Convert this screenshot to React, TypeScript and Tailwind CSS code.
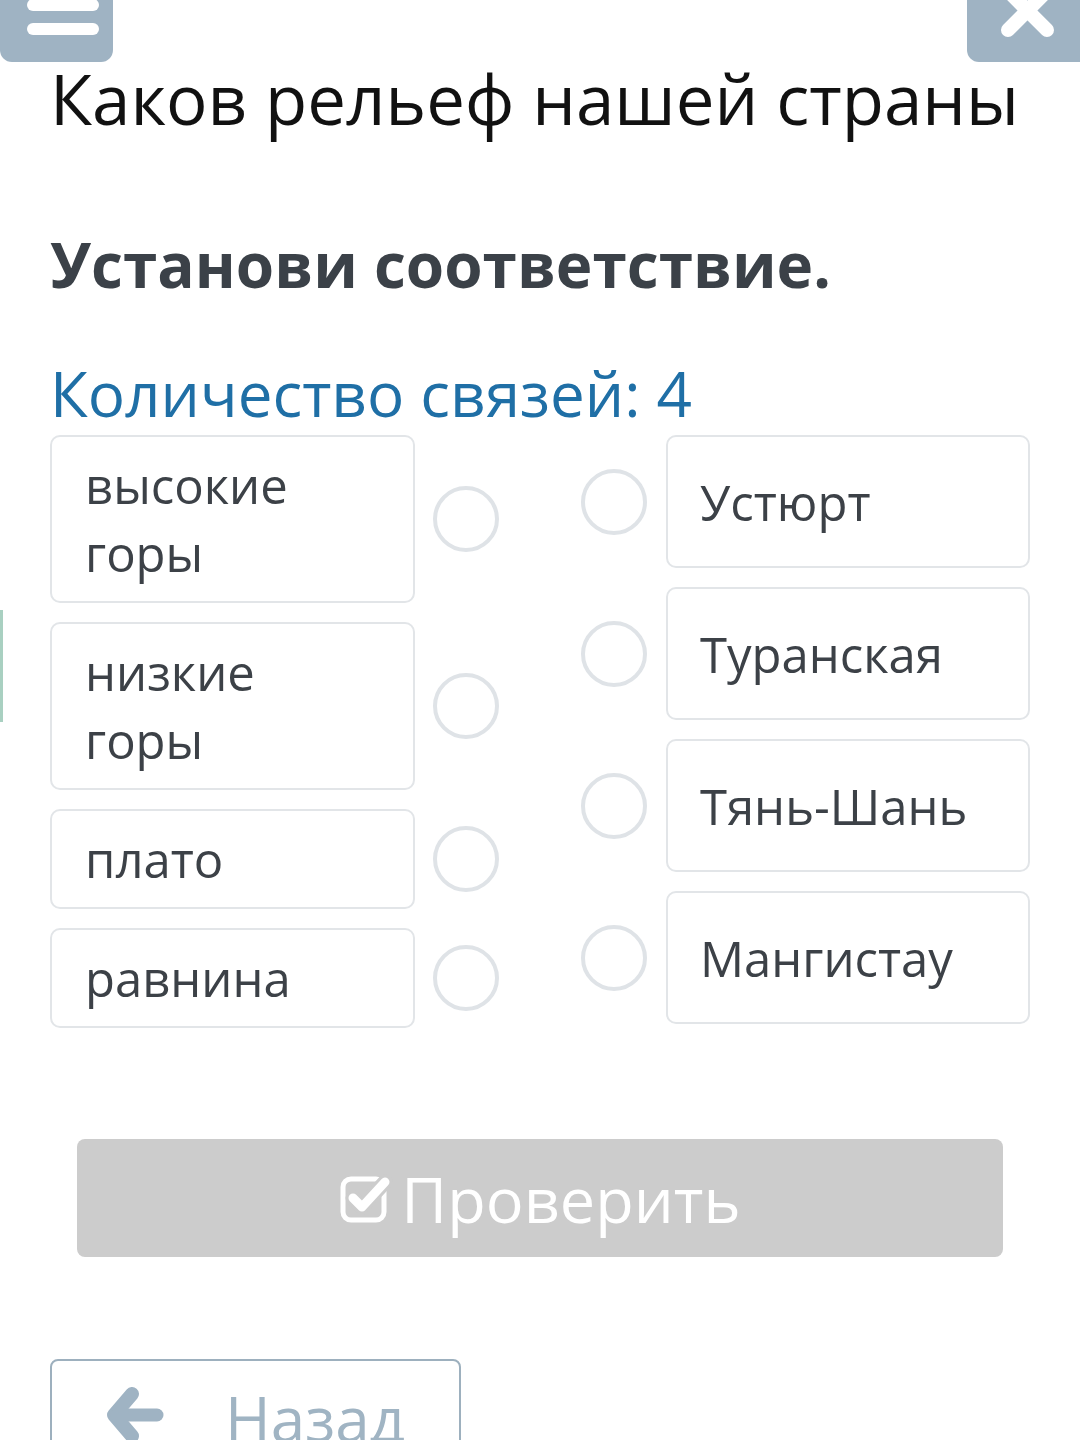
import React from 'react';

const leftItems = [
    { text: ['высокие', 'горы'] },
    { text: ['низкие', 'горы'] },
    { text: ['плато'] },
    { text: ['равнина'] },
];

const rightItems = ['Устюрт', 'Туранская', 'Тянь-Шань', 'Мангистау'];

const Dot = () => (
    <div className="w-[66px] h-[66px] shrink-0 rounded-full border-[4px] border-[#dfe3e7] bg-white" />
);

const CheckIcon = () => (
    <svg width="56" height="52" viewBox="0 0 56 52" className="shrink-0">
        <rect x="4" y="7" width="41" height="41" rx="8" fill="none" stroke="white" strokeWidth="5" />
        <path d="M38 3 L50 3 L50 14 Z" fill="#cccccc" />
        <polyline points="14,26 23,35 46,10" fill="none" stroke="#cccccc" strokeWidth="15" strokeLinecap="round" strokeLinejoin="round" />
        <polyline points="14,26 23,35 46,10" fill="none" stroke="white" strokeWidth="9" strokeLinecap="round" strokeLinejoin="round" />
    </svg>
);

const ArrowIcon = () => (
    <svg width="58" height="56" viewBox="0 0 58 56" className="shrink-0">
        <polyline points="25,7 7,28 25,49" fill="none" stroke="#9fb3c3" strokeWidth="14" strokeLinecap="round" strokeLinejoin="round" />
        <line x1="10" y1="28" x2="50" y2="28" stroke="#9fb3c3" strokeWidth="13" strokeLinecap="round" />
    </svg>
);

const App = () => {
    return (
        <div
            className="relative w-full h-[1440px] overflow-hidden bg-white"
            style={{ fontFamily: '"Open Sans", "Noto Sans", sans-serif' }}
        >
            {/* left edge strip */}
            <div className="absolute left-0 top-[610px] w-[3px] h-[112px] bg-[#a9d0c1]" />

            {/* top bar */}
            <div className="flex justify-between h-[62px]">
                <div className="w-[113px] h-[62px] bg-[#9fb3c3] rounded-b-[12px]">
                    <svg width="113" height="62" viewBox="0 0 113 62">
                        <rect x="27" y="-1" width="72" height="12" rx="6" fill="white" />
                        <rect x="27" y="23" width="72" height="12" rx="6" fill="white" />
                    </svg>
                </div>
                <div className="w-[113px] h-[62px] bg-[#9fb3c3] rounded-bl-[12px]">
                    <svg width="113" height="62" viewBox="0 0 113 62">
                        <line x1="41" y1="-9" x2="80" y2="30" stroke="white" strokeWidth="14" strokeLinecap="round" />
                        <line x1="80" y1="-9" x2="41" y2="30" stroke="white" strokeWidth="14" strokeLinecap="round" />
                    </svg>
                </div>
            </div>

            <div className="px-[50px]">
                <h1 className="mt-[2px] text-[69px] leading-none text-[#111111] whitespace-nowrap">
                    Каков рельеф нашей страны
                </h1>

                <h2 className="mt-[100px] text-[62px] leading-none font-bold text-[#3b4148] whitespace-nowrap">
                    Установи соответствие.
                </h2>

                <div className="mt-[67px] text-[62px] leading-none text-[#1f6fa6] whitespace-nowrap">
                    Количество связей: 4
                </div>

                <div className="mt-[11px] flex justify-between w-[980px]">
                    <div className="flex flex-col gap-[19px]">
                        {leftItems.map((item, i) => (
                            <div key={i} className="flex items-center gap-[18px]">
                                <div className="w-[365px] border-2 border-[#e2e5e8] rounded-[10px] px-[33px] py-[14px] text-[49px] leading-[68px] text-[#3c4147]">
                                    {item.text.map((t, j) => (
                                        <div key={j}>{t}</div>
                                    ))}
                                </div>
                                <Dot />
                            </div>
                        ))}
                    </div>
                    <div className="flex flex-col gap-[19px]">
                        {rightItems.map((t, i) => (
                            <div key={i} className="flex items-center gap-[19px]">
                                <Dot />
                                <div className="w-[364px] h-[133px] flex items-center border-2 border-[#e2e5e8] rounded-[10px] px-[32px] text-[49px] leading-[68px] text-[#3c4147]">
                                    {t}
                                </div>
                            </div>
                        ))}
                    </div>
                </div>

                <div className="mt-[111px] mx-[27px] h-[118px] rounded-[8px] bg-[#cccccc] flex items-center justify-center gap-[6px] text-white">
                    <CheckIcon />
                    <span className="text-[63px] leading-none">Проверить</span>
                </div>

                <div className="mt-[102px] w-[411px] h-[120px] border-2 border-[#9db0be] rounded-[8px] flex items-start pt-[26px] pl-[55px] gap-[60px] text-[#a0b4c3]">
                    <ArrowIcon />
                    <span className="text-[62px] leading-none">Назад</span>
                </div>
            </div>
        </div>
    );
};

export default App;
